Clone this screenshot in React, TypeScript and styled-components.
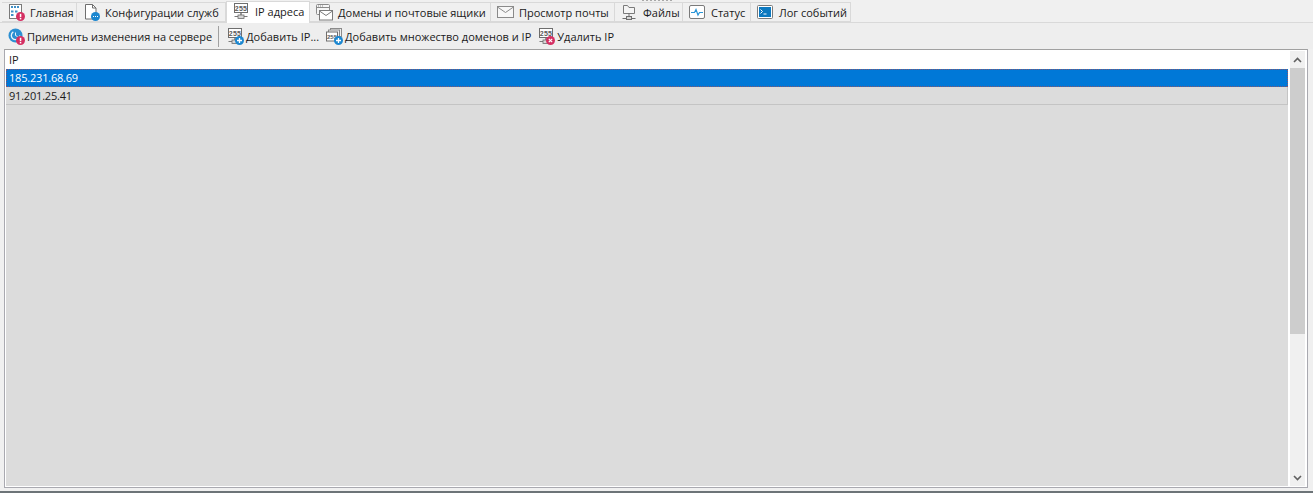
import React from 'react';
import { createGlobalStyle, styled, css } from 'styled-components';

const Global = createGlobalStyle`
  html, body { margin: 0; padding: 0; height: 493px; overflow: hidden; background: #f0f0f0; }
  #root { height: 493px; }
`;

const Window = styled.div`
  position: relative;
  width: 1313px;
  height: 493px;
  box-sizing: border-box;
  display: flex;
  flex-direction: column;
  background: #f0f0f0;
  border-bottom: 2px solid #6d7478;
  font-family: "Open Sans", "Noto Sans", sans-serif;
  font-size: 11px;
  color: #1a1a1a;
`;

const Grip = styled.div`
  position: absolute;
  top: 0;
  left: 642px;
  width: 30px;
  height: 1px;
  background: repeating-linear-gradient(90deg, #a8a8a8 0 2px, transparent 2px 4px);
`;

const TabStrip = styled.div`
  height: 23px;
  flex: none;
  display: flex;
  align-items: flex-end;
  padding-left: 2px;
  border-bottom: 1px solid #d9d9d9;
  box-sizing: border-box;
`;

const Tab = styled.div<{ $width: number; $active?: boolean }>`
  width: ${(p) => p.$width}px;
  height: ${(p) => (p.$active ? 22 : 20)}px;
  margin-bottom: ${(p) => (p.$active ? -1 : 0)}px;
  box-sizing: border-box;
  flex: none;
  display: flex;
  align-items: center;
  gap: 5px;
  padding: ${(p) => (p.$active ? '0 0 3px 6px' : '0 0 0 6px')};
  background: ${(p) => (p.$active ? '#ffffff' : '#f0f0f0')};
  border: 1px solid #d9d9d9;
  border-bottom: ${(p) => (p.$active ? 'none' : '1px solid #d9d9d9')};
  border-left: ${(p) => (p.$active ? '1px solid #d9d9d9' : 'none')};
  white-space: nowrap;
`;

const Toolbar = styled.div`
  height: 26px;
  flex: none;
  display: flex;
  align-items: center;
  padding-left: 8px;
  background: #eeeeee;
  box-sizing: border-box;
`;

const ToolButton = styled.div<{ $tight?: boolean }>`
  display: flex;
  align-items: center;
  gap: 2px;
  margin-right: 7px;
  white-space: nowrap;
  letter-spacing: ${(p) => (p.$tight ? '-0.05px' : 'normal')};
`;

const Separator = styled.div`
  width: 1px;
  height: 21px;
  background: #a0a0a0;
  margin: 0 8px 0 -1px;
`;

const Frame = styled.div`
  flex: 1;
  margin: 0 5px 3px 4px;
  display: flex;
  gap: 2px;
  padding: 1px 2px 1px 1px;
  border: 1px solid #a9a9b0;
  border-top-color: #a0a0a0;
  background: #ffffff;
  box-sizing: border-box;
  min-height: 0;
`;

const List = styled.div`
  flex: 1;
  display: flex;
  flex-direction: column;
  background: #dcdcdc;
  min-width: 0;
`;

const HeaderRow = styled.div`
  height: 18px;
  flex: none;
  padding-left: 3px;
  line-height: 18px;
  background: #ffffff;
`;

const dotsH = 'repeating-linear-gradient(90deg, rgba(224, 64, 44, 0.6) 0 1px, transparent 1px 2px)';
const dotsV = 'repeating-linear-gradient(0deg, rgba(224, 64, 44, 0.6) 0 1px, transparent 1px 2px)';

const selectedRow = css`
  color: #ffffff;
  background:
    ${dotsH} top / 100% 1px no-repeat,
    ${dotsH} bottom / 100% 1px no-repeat,
    ${dotsV} left / 1px 100% no-repeat,
    ${dotsV} right / 1px 100% no-repeat,
    #0078d7;
`;

const Row = styled.div<{ $selected?: boolean }>`
  height: 18px;
  flex: none;
  box-sizing: border-box;
  padding-left: 3px;
  line-height: 17px;
  letter-spacing: -0.2px;
  color: #1a1a1a;
  background: #dcdcdc;
  border-bottom: ${(p) => (p.$selected ? 'none' : '1px solid #c4c4c4')};
  border-right: ${(p) => (p.$selected ? 'none' : '1px solid #c4c4c4')};
  ${(p) => p.$selected && selectedRow}
`;

const Scrollbar = styled.div`
  width: 15px;
  flex: none;
  display: flex;
  flex-direction: column;
  background: #f0f0f0;
`;

const ScrollArrow = styled.div`
  height: 17px;
  flex: none;
  display: flex;
  align-items: center;
  justify-content: center;
`;

const ScrollThumb = styled.div`
  height: 266px;
  flex: none;
  background: #cdcdcd;
`;

const ScrollTrack = styled.div`
  flex: 1;
`;

const Ico = ({ children }: { children: React.ReactNode }) => (
  <svg width="17" height="17" viewBox="0 0 17 17" style={{ flex: 'none' }}>{children}</svg>
);

const Red = () => (
  <>
    <circle cx="12.5" cy="12.5" r="4.5" fill="#d42f62" />
    <rect x="11.8" y="9.8" width="1.5" height="3.4" fill="#fff" />
    <rect x="11.8" y="14" width="1.5" height="1.4" fill="#fff" />
  </>
);
const Plus = () => (
  <>
    <circle cx="12.5" cy="12.5" r="4.5" fill="#1b87d0" />
    <path d="M10 12.5h5M12.5 10v5" stroke="#fff" strokeWidth="1.3" />
  </>
);
const Cross = () => (
  <>
    <circle cx="12.5" cy="12.5" r="4.5" fill="#d42f62" />
    <path d="M10.8 10.8l3.4 3.4M14.2 10.8l-3.4 3.4" stroke="#fff" strokeWidth="1.2" />
  </>
);
const Monitor255 = () => (
  <>
    <rect x="1.5" y=".5" width="13" height="9" fill="#fff" stroke="#6e6e6e" />
    <text x="8" y="7.6" textAnchor="middle" fontFamily="Liberation Sans, sans-serif" fontSize="7" fontWeight="700" letterSpacing=".3" fill="#5a5a5a">255</text>
    <path d="M8 10v3" stroke="#6e6e6e" strokeWidth="1.4" />
    <path d="M1.5 13.5h13" stroke="#7a7a7a" />
    <rect x="5" y="12" width="6" height="3.5" fill="#d6d6d6" stroke="#6e6e6e" strokeWidth=".8" />
  </>
);

const HomeIcon = () => (
  <Ico>
    <rect x="1.5" y=".5" width="12" height="14" fill="#fff" stroke="#7a7a7a" />
    <path d="M3 3h9" stroke="#3f8fc6" strokeWidth="2" strokeDasharray="2 1" />
    <path d="M3 6.5h2.5v2H3zM7 6.5h2.5v2H7zM3 10h2.5v2H3z" fill="#3f8fc6" />
    <Red />
  </Ico>
);
const ConfigIcon = () => (
  <Ico>
    <path d="M2.5 .5h7l3.5 3.5v11H2.5z" fill="#fff" stroke="#6e6e6e" />
    <path d="M9.5 .5v3.5H13" fill="none" stroke="#6e6e6e" />
    <circle cx="12.5" cy="12.5" r="4.5" fill="#1b87d0" />
    <path d="M10 12.5h1M12 12.5h1M14 12.5h1" stroke="#fff" />
  </Ico>
);
const IpIcon = () => <Ico><Monitor255 /></Ico>;
const MailIcon = () => (
  <Ico>
    <rect x=".5" y=".5" width="13" height="10" rx="1" fill="#f6f6f6" stroke="#8a8a8a" />
    <path d="M.5 3.5h13M2 2h1M4 2h1M6 2h1" stroke="#8a8a8a" />
    <rect x="3.5" y="6.5" width="13" height="9.5" fill="#fff" stroke="#7a7a7a" />
    <path d="M3.5 7l6.5 4.5L16.5 7" fill="none" stroke="#7a7a7a" />
  </Ico>
);
const EnvelopeIcon = () => (
  <Ico>
    <rect x=".5" y="2.5" width="16" height="11" fill="#f7f7f7" stroke="#8a8a8a" />
    <path d="M.5 3l8 5.5 8-5.5" fill="none" stroke="#8a8a8a" />
  </Ico>
);
const FilesIcon = () => (
  <Ico>
    <path d="M2.5 9.5v-8h4l1.5 2h5.5v6z" fill="#f4f4f4" stroke="#7a7a7a" />
    <path d="M8 9.5v3M1.5 14.5h13" stroke="#6e6e6e" />
    <rect x="5.5" y="12.5" width="5" height="3" fill="#d6d6d6" stroke="#6e6e6e" />
  </Ico>
);
const StatusIcon = () => (
  <Ico>
    <rect x=".5" y="1.5" width="15" height="13" rx="1.5" fill="#fff" stroke="#7a7a7a" />
    <path d="M2 8.5h3.5l1.5-3 2 5.5 1.5-2.5H14" fill="none" stroke="#2a96d8" strokeWidth="1.2" />
  </Ico>
);
const LogIcon = () => (
  <Ico>
    <rect x=".5" y="1.5" width="15" height="13" rx="1" fill="#fff" stroke="#7a7a7a" />
    <rect x="2" y="3" width="12" height="10" fill="#0c79c0" />
    <path d="M3.5 5.5l2 2-2 2M6.5 10h3" fill="none" stroke="#fff" />
  </Ico>
);
const ApplyIcon = () => (
  <Ico>
    <circle cx="7.5" cy="7.5" r="7" fill="#2c8fd2" />
    <circle cx="7.5" cy="7.5" r="4.2" fill="none" stroke="#e8f4fb" strokeWidth="1.3" strokeDasharray="17 9" />
    <path d="M7.5 4.5v3l2 1" fill="none" stroke="#e8f4fb" />
    <Red />
  </Ico>
);
const AddIpIcon = () => <Ico><Monitor255 /><Plus /></Ico>;
const AddManyIcon = () => (
  <Ico>
    <rect x="4.5" y=".5" width="11" height="8" fill="#eee" stroke="#8a8a8a" />
    <rect x="2.5" y="2" width="11" height="8" fill="#eee" stroke="#8a8a8a" />
    <rect x=".5" y="4" width="11" height="9" fill="#fff" stroke="#6e6e6e" />
    <text x="6" y="10.5" textAnchor="middle" fontFamily="Liberation Sans, sans-serif" fontSize="6" fontWeight="700" fill="#5a5a5a">255</text>
    <Plus />
  </Ico>
);
const DeleteIpIcon = () => <Ico><Monitor255 /><Cross /></Ico>;

const tabs = [
  { label: 'Главная', width: 75, icon: <HomeIcon /> },
  { label: 'Конфигурации служб', width: 149, icon: <ConfigIcon /> },
  { label: 'IP адреса', width: 84, icon: <IpIcon />, active: true },
  { label: 'Домены и почтовые ящики', width: 181, icon: <MailIcon /> },
  { label: 'Просмотр почты', width: 124, icon: <EnvelopeIcon /> },
  { label: 'Файлы', width: 68, icon: <FilesIcon /> },
  { label: 'Статус', width: 68, icon: <StatusIcon /> },
  { label: 'Лог событий', width: 100, icon: <LogIcon /> },
];

export default function App() {
  return (
    <Window>
      <Global />
      <Grip />
      <TabStrip>
        {tabs.map((t) => (
          <Tab key={t.label} $width={t.width} $active={t.active}>
            {t.icon}
            {t.label}
          </Tab>
        ))}
      </TabStrip>
      <Toolbar>
        <ToolButton $tight><ApplyIcon />Применить изменения на сервере</ToolButton>
        <Separator />
        <ToolButton><AddIpIcon />Добавить IP...</ToolButton>
        <ToolButton><AddManyIcon />Добавить множество доменов и IP</ToolButton>
        <ToolButton><DeleteIpIcon />Удалить IP</ToolButton>
      </Toolbar>
      <Frame>
        <List>
          <HeaderRow>IP</HeaderRow>
          <Row $selected>185.231.68.69</Row>
          <Row>91.201.25.41</Row>
        </List>
        <Scrollbar>
          <ScrollArrow>
            <svg width="9" height="6" viewBox="0 0 9 6"><path d="M1 5l3.5-3.5L8 5" fill="none" stroke="#606060" strokeWidth="1.6" /></svg>
          </ScrollArrow>
          <ScrollThumb />
          <ScrollTrack />
          <ScrollArrow>
            <svg width="9" height="6" viewBox="0 0 9 6"><path d="M1 1l3.5 3.5L8 1" fill="none" stroke="#606060" strokeWidth="1.6" /></svg>
          </ScrollArrow>
        </Scrollbar>
      </Frame>
    </Window>
  );
}
